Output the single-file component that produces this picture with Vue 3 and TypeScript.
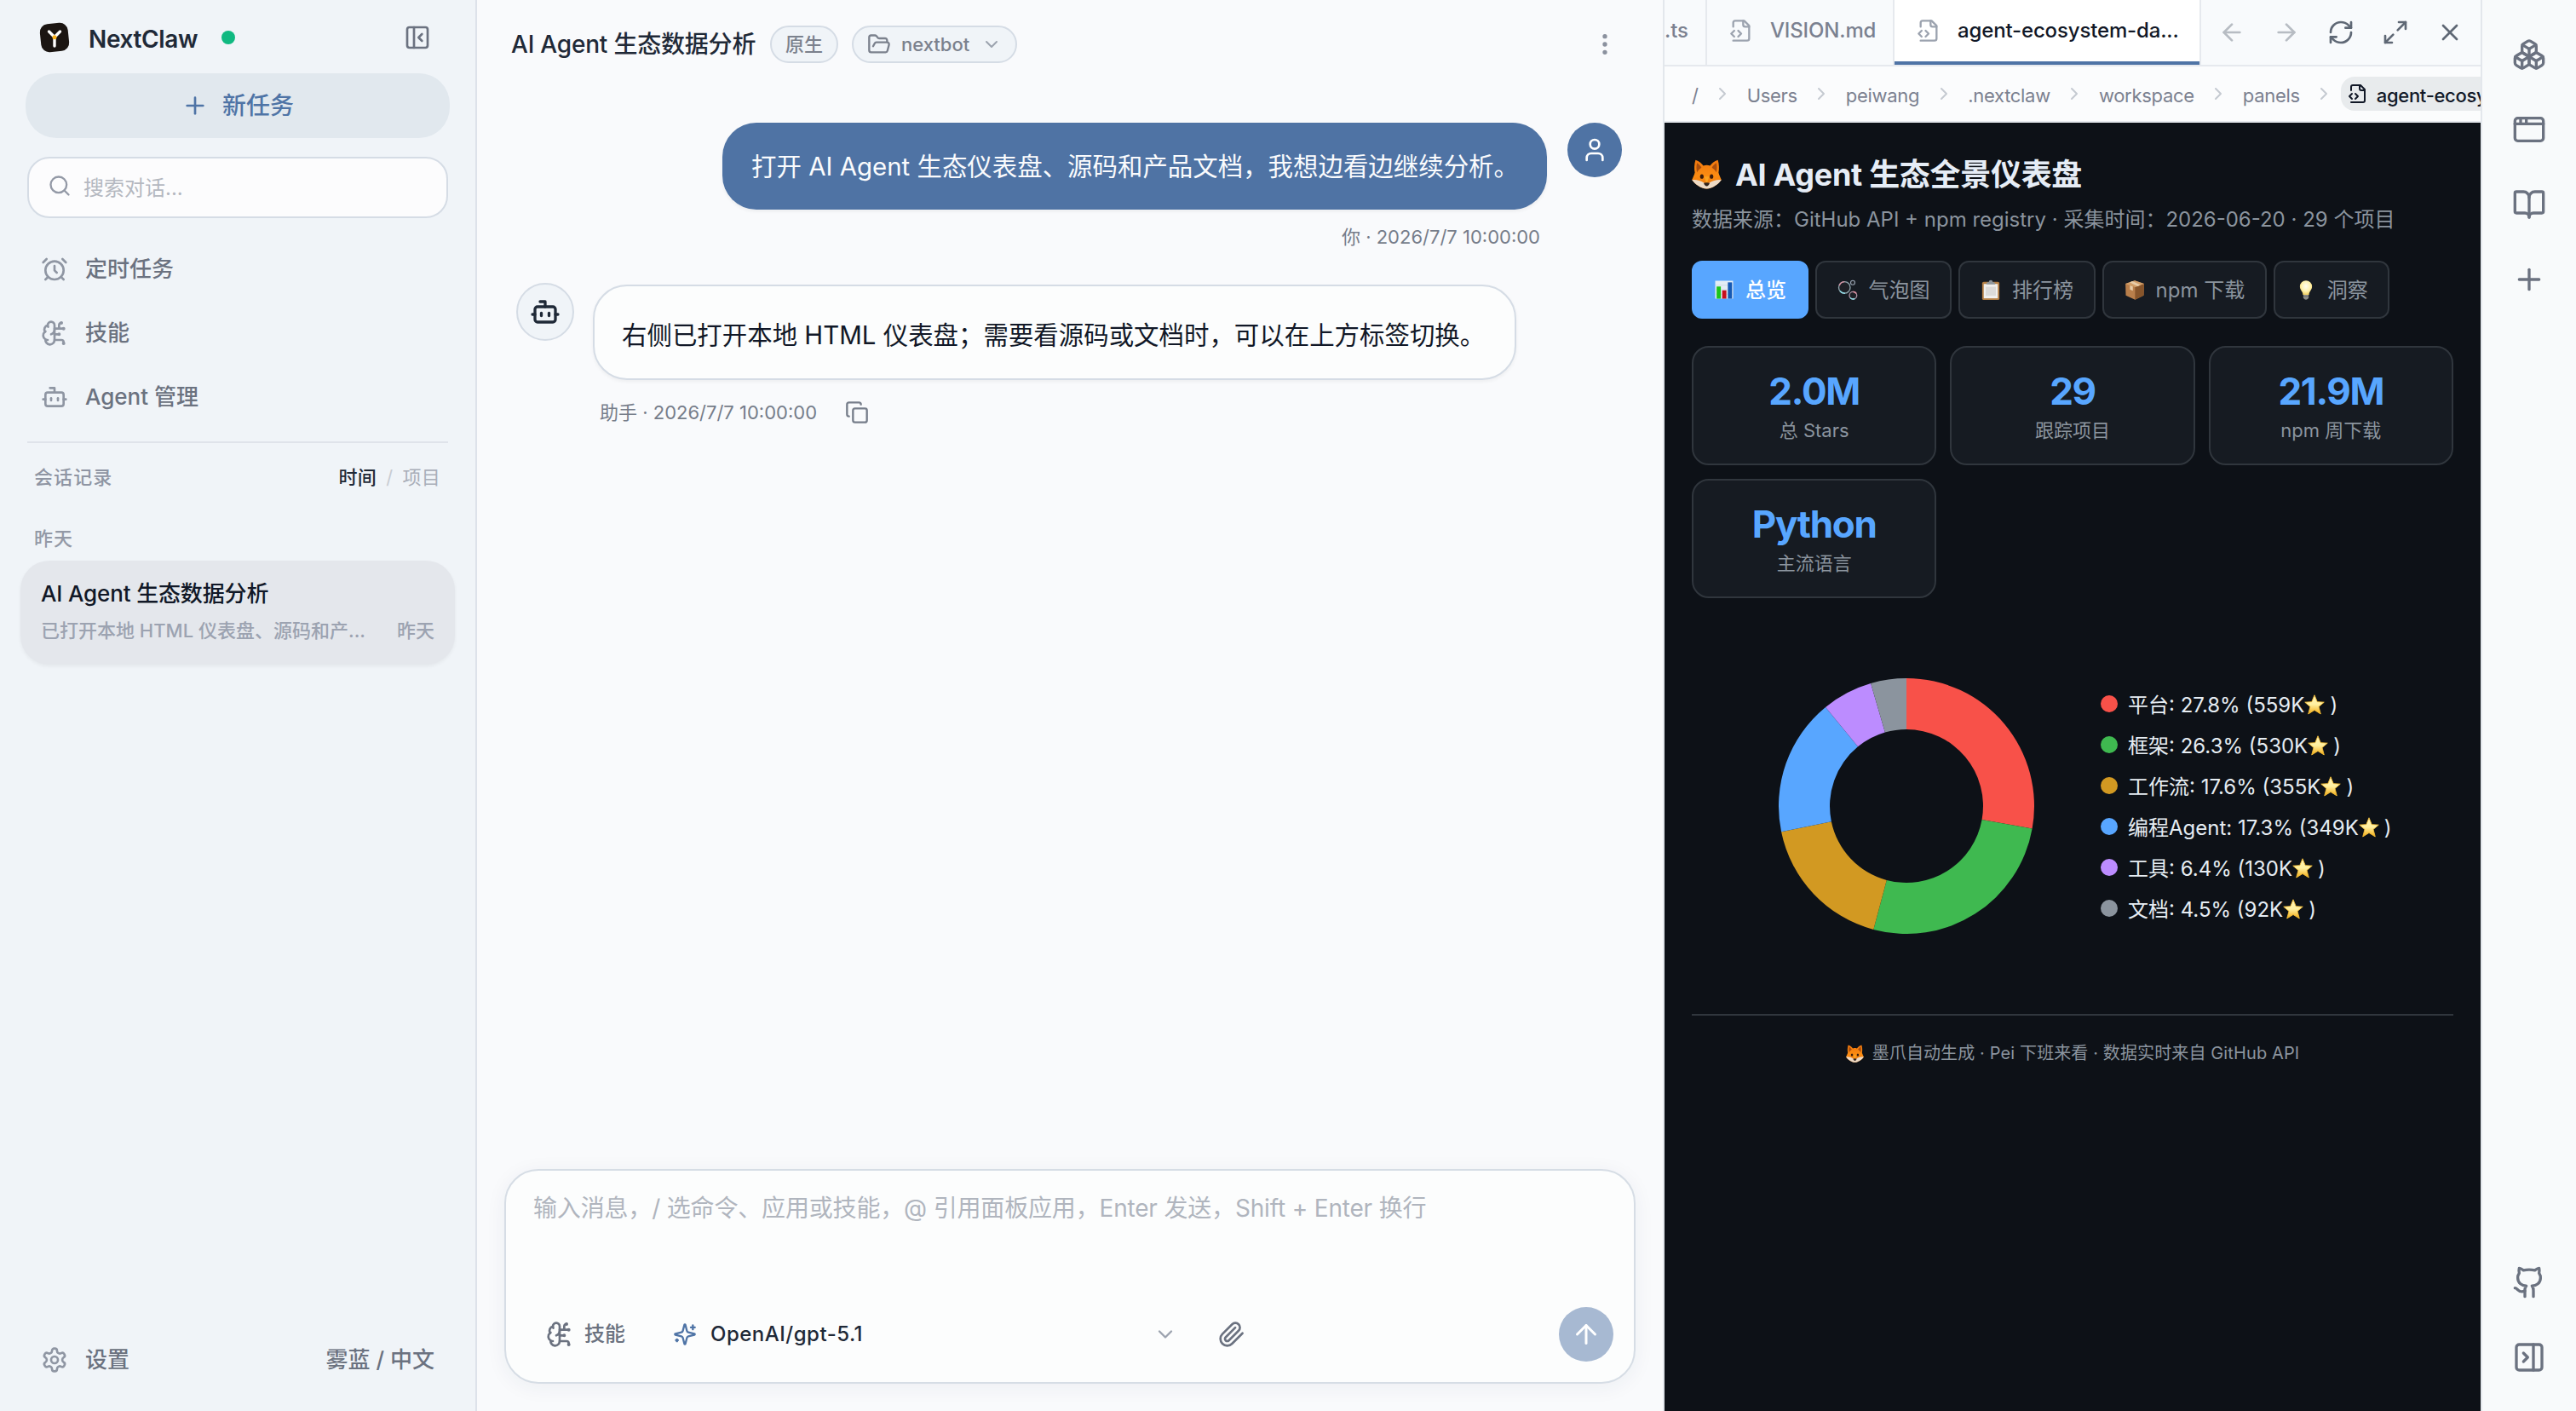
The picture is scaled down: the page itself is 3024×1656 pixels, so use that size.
<script setup lang="ts">
import { h } from 'vue'

const glyphs: Record<string, string> = {
  panelClose: '<rect width="18" height="18" x="3" y="3" rx="2"/><path d="M9 3v18"/><path d="m16 15-3-3 3-3"/>',
  panelRight: '<rect width="18" height="18" x="3" y="3" rx="2"/><path d="M15 3v18"/><path d="m8 9 3 3-3 3"/>',
  plus: '<path d="M5 12h14"/><path d="M12 5v14"/>',
  search: '<circle cx="11" cy="11" r="8"/><path d="m21 21-4.3-4.3"/>',
  alarm: '<circle cx="12" cy="13" r="8"/><path d="M12 9v4l2 2"/><path d="M5 3 2 6"/><path d="m22 6-3-3"/><path d="M6.38 18.7 4 21"/><path d="M17.64 18.67 20 21"/>',
  brain: '<path d="M12 5a3 3 0 1 0-5.997.125 4 4 0 0 0-2.526 5.77 4 4 0 0 0 .556 6.588A4 4 0 1 0 12 18Z"/><path d="M9 13a4.5 4.5 0 0 0 3-4"/><path d="M6.003 5.125A3 3 0 0 0 6.401 6.5"/><path d="M3.477 10.896a4 4 0 0 1 .585-.396"/><path d="M6 18a4 4 0 0 1-1.967-.516"/><path d="M12 13h4"/><path d="M12 18h6a2 2 0 0 1 2 2v1"/><path d="M12 8h8"/><path d="M16 8V5a2 2 0 0 1 2-2"/><circle cx="16" cy="13" r=".5"/><circle cx="18" cy="3" r=".5"/><circle cx="20" cy="21" r=".5"/><circle cx="20" cy="8" r=".5"/>',
  bot: '<path d="M12 8V4H8"/><rect width="16" height="12" x="4" y="8" rx="2"/><path d="M2 14h2"/><path d="M20 14h2"/><path d="M15 13v2"/><path d="M9 13v2"/>',
  gear: '<path d="M12.22 2h-.44a2 2 0 0 0-2 2v.18a2 2 0 0 1-1 1.73l-.43.25a2 2 0 0 1-2 0l-.15-.08a2 2 0 0 0-2.73.73l-.22.38a2 2 0 0 0 .73 2.73l.15.1a2 2 0 0 1 1 1.72v.51a2 2 0 0 1-1 1.74l-.15.09a2 2 0 0 0-.73 2.73l.22.38a2 2 0 0 0 2.73.73l.15-.08a2 2 0 0 1 2 0l.43.25a2 2 0 0 1 1 1.73V20a2 2 0 0 0 2 2h.44a2 2 0 0 0 2-2v-.18a2 2 0 0 1 1-1.73l.43-.25a2 2 0 0 1 2 0l.15.08a2 2 0 0 0 2.73-.73l.22-.39a2 2 0 0 0-.73-2.73l-.15-.08a2 2 0 0 1-1-1.74v-.5a2 2 0 0 1 1-1.74l.15-.09a2 2 0 0 0 .73-2.73l-.22-.38a2 2 0 0 0-2.73-.73l-.15.08a2 2 0 0 1-2 0l-.43-.25a2 2 0 0 1-1-1.73V4a2 2 0 0 0-2-2z"/><circle cx="12" cy="12" r="3"/>',
  folder: '<path d="m6 14 1.5-2.9A2 2 0 0 1 9.24 10H20a2 2 0 0 1 1.94 2.5l-1.54 6a2 2 0 0 1-1.95 1.5H4a2 2 0 0 1-2-2V5a2 2 0 0 1 2-2h3.9a2 2 0 0 1 1.69.9l.81 1.2a2 2 0 0 0 1.67.9H18a2 2 0 0 1 2 2v2"/>',
  down: '<path d="m6 9 6 6 6-6"/>',
  right: '<path d="m9 18 6-6-6-6"/>',
  more: '<circle cx="12" cy="12" r="1"/><circle cx="12" cy="5" r="1"/><circle cx="12" cy="19" r="1"/>',
  user: '<path d="M19 21v-2a4 4 0 0 0-4-4H9a4 4 0 0 0-4 4v2"/><circle cx="12" cy="7" r="4"/>',
  copy: '<rect width="14" height="14" x="8" y="8" rx="2"/><path d="M4 16c-1.1 0-2-.9-2-2V4c0-1.1.9-2 2-2h10c1.1 0 2 .9 2 2"/>',
  sparkles: '<path d="M9.937 15.5A2 2 0 0 0 8.5 14.063l-6.135-1.582a.5.5 0 0 1 0-.962L8.5 9.936A2 2 0 0 0 9.937 8.5l1.582-6.135a.5.5 0 0 1 .963 0L14.063 8.5A2 2 0 0 0 15.5 9.937l6.135 1.581a.5.5 0 0 1 0 .964L15.5 14.063a2 2 0 0 0-1.437 1.437l-1.582 6.135a.5.5 0 0 1-.963 0z"/><path d="M20 3v4"/><path d="M22 5h-4"/><path d="M4 17v2"/><path d="M5 18H3"/>',
  clip: '<path d="m21.44 11.05-9.19 9.19a6 6 0 0 1-8.49-8.49l8.57-8.57A4 4 0 1 1 18 8.84l-8.59 8.57a2 2 0 0 1-2.83-2.83l8.49-8.48"/>',
  up: '<path d="m5 12 7-7 7 7"/><path d="M12 19V5"/>',
  file: '<path d="M4 22h14a2 2 0 0 0 2-2V7l-5-5H6a2 2 0 0 0-2 2v4"/><path d="M14 2v4a2 2 0 0 0 2 2h4"/><path d="m5 12-3 3 3 3"/><path d="m9 18 3-3-3-3"/>',
  arrowLeft: '<path d="m12 19-7-7 7-7"/><path d="M19 12H5"/>',
  arrowRight: '<path d="M5 12h14"/><path d="m12 5 7 7-7 7"/>',
  refresh: '<path d="M3 12a9 9 0 0 1 9-9 9.75 9.75 0 0 1 6.74 2.74L21 8"/><path d="M21 3v5h-5"/><path d="M21 12a9 9 0 0 1-9 9 9.75 9.75 0 0 1-6.74-2.74L3 16"/><path d="M8 16H3v5"/>',
  maximize: '<path d="M15 3h6v6"/><path d="M9 21H3v-6"/><path d="m21 3-7 7"/><path d="m3 21 7-7"/>',
  close: '<path d="M18 6 6 18"/><path d="m6 6 12 12"/>',
  boxes: '<path d="M2.97 12.92A2 2 0 0 0 2 14.63v3.24a2 2 0 0 0 .97 1.71l3 1.8a2 2 0 0 0 2.06 0L12 19v-5.5l-5-3-4.03 2.42Z"/><path d="m7 16.5-4.74-2.85"/><path d="m7 16.5 5-3"/><path d="M7 16.5v5.17"/><path d="M12 13.5V19l3.97 2.38a2 2 0 0 0 2.06 0l3-1.8a2 2 0 0 0 .97-1.71v-3.24a2 2 0 0 0-.97-1.71L17 10.5l-5 3Z"/><path d="m17 16.5-5-3"/><path d="m17 16.5 4.74-2.85"/><path d="M17 16.5v5.17"/><path d="M7.97 4.42A2 2 0 0 0 7 6.13v4.37l5 3 5-3V6.13a2 2 0 0 0-.97-1.71l-3-1.8a2 2 0 0 0-2.06 0l-3 1.8Z"/><path d="M12 8 7.26 5.15"/><path d="m12 8 4.74-2.85"/><path d="M12 13.5V8"/>',
  appWindow: '<rect x="2" y="4" width="20" height="16" rx="2"/><path d="M10 4v4"/><path d="M2 8h20"/><path d="M6 4v4"/>',
  book: '<path d="M12 7v14"/><path d="M3 18a1 1 0 0 1-1-1V4a1 1 0 0 1 1-1h5a4 4 0 0 1 4 4 4 4 0 0 1 4-4h5a1 1 0 0 1 1 1v13a1 1 0 0 1-1 1h-6a3 3 0 0 0-3 3 3 3 0 0 0-3-3z"/>',
  github: '<path d="M15 22v-4a4.8 4.8 0 0 0-1-3.5c3 0 6-2 6-5.5.08-1.25-.27-2.48-1-3.5.28-1.15.28-2.35 0-3.5 0 0-1 0-3 1.5-2.64-.5-5.36-.5-8 0C6 2 5 2 5 2c-.3 1.15-.3 2.35 0 3.5A5.403 5.403 0 0 0 4 9c0 3.5 3 5.5 6 5.5-.39.49-.68 1.05-.85 1.65-.17.6-.22 1.23-.15 1.85v4"/><path d="M9 18c-4.51 2-5-2-7-2"/>',
}

// Full-colour pictograms, drawn on a 32-unit square
const pictures: Record<string, string> = {
  fox: '<defs><linearGradient id="fx" x1="0" y1="0" x2="0" y2="1"><stop offset="0" stop-color="#f0780e"/><stop offset=".55" stop-color="#fb8c12"/><stop offset="1" stop-color="#e8730c"/></linearGradient></defs><path d="M4 .6C8 2 11 4.600 12.400 6.800 14.800 6 17.200 6 19.600 6.800 21 4.600 24 2 28 .6 29.400 5 29.500 10.500 28.700 14.200 29.300 17 31 20 31.800 22 29 26.500 22 31.600 16 31.600S3 26.500.2 22C1 20 2.700 17 3.300 14.200 2.500 10.500 2.600 5 4 .6Z" fill="url(#fx)"/><path d="M5.600 3.800C8 5.400 9.600 7.200 10.400 8.800 8.400 10 6.600 12 5.600 14 4.800 10.500 4.800 7 5.600 3.800ZM26.400 3.800C24 5.400 22.400 7.200 21.600 8.800 23.600 10 25.400 12 26.400 14 27.200 10.500 27.200 7 26.400 3.800Z" fill="#a94e0d"/><path d="M.2 22C4 21.400 9.500 22.400 13 25.200L16 26.500 19 25.200C22.500 22.400 28 21.400 31.800 22 29 26.500 22 31.600 16 31.600S3 26.500.2 22Z" fill="#eedbc6"/><path d="M13.400 18.500 16 27 18.600 18.500Z" fill="#fba321"/><ellipse cx="10.800" cy="18.400" rx="1.900" ry="2.500" fill="#3a1c0c"/><ellipse cx="21.200" cy="18.400" rx="1.900" ry="2.500" fill="#3a1c0c"/><path d="M12.800 25.400Q16 24.200 19.200 25.400 18 28.800 16 28.800T12.800 25.400Z" fill="#32231c"/>',
  chart: '<path d="M2 2h28v28H2z" fill="#e3edf5"/><path d="M2 9h28M2 16h28M2 23h28" stroke="#c3d3df" stroke-width=".8"/><path d="M4.200 11h6.600v19H4.200z" fill="#1cc41c"/><path d="M12.900 17h6.600v13h-6.600z" fill="#c80f1c"/><path d="M21.800 4.500h6.600V30h-6.600z" fill="#1559b4"/>',
  bubbles: '<g fill="#1d2026"><circle cx="11" cy="12.500" r="9" stroke="#8ea4ac" stroke-width="1.800"/><circle cx="24.500" cy="25" r="5.800" stroke="#a98fa0" stroke-width="1.800"/><circle cx="24" cy="5" r="3.300" stroke="#9aa5b2" stroke-width="1.500"/></g><path d="M3 9.500A9 9 0 0 1 11 3.500M29.500 22A5.800 5.800 0 0 0 24.500 19.200" stroke="#e08fa0" stroke-width="2" fill="none"/><path d="M4 18A9 9 0 0 0 12 21.500M20 28.500A5.800 5.800 0 0 0 27 30" stroke="#8edbe6" stroke-width="2" fill="none"/>',
  clipboard: '<rect x="2.500" y="3.500" width="27" height="28.500" rx="2.500" fill="#b58046"/><path d="M5 7h22v22.500H5z" fill="#f1f0ee"/><path d="M8 11.500h16v14H8z" fill="#dcdbd9"/><path d="M9 7.500q0-3.500 4-3.500 0-3 3-3t3 3q4 0 4 3.500z" fill="#8d959c"/>',
  box: '<path d="M1.500 6.500 16 1.500 30.500 6.500 30 25 16.500 31.500 2 25z" fill="#b97f4b"/><path d="M16.500 12 30.500 6.500 30 25 16.500 31.500z" fill="#87552b"/><path d="M1.500 6.500 16 1.500 30.500 6.500 16.500 12z" fill="#d19e69"/><path d="M8 4.300 12.500 2.700 25 8.700 20.500 10.500z" fill="#e8cda9"/><path d="M8.500 9.200 13 11v6.500L8.500 15.500z" fill="#e8cda9"/>',
  bulb: '<defs><radialGradient id="bl" cx=".5" cy=".4" r=".6"><stop offset="0" stop-color="#fffef2"/><stop offset=".6" stop-color="#fff3b0"/><stop offset="1" stop-color="#f0cf62"/></radialGradient></defs><path d="M16 1.500A9.500 9.500 0 0 1 25.500 11C25.500 16.500 20.800 18.500 20.800 24H11.200C11.200 18.500 6.500 16.500 6.500 11A9.500 9.500 0 0 1 16 1.500Z" fill="url(#bl)"/><path d="M11.800 24h8.400v5q-2 2.500-4.200 2.500T11.800 29z" fill="#8f8f8a"/><path d="M11.800 26.500h8.400" stroke="#5d5d5a"/>',
  star: '<defs><linearGradient id="st" x1="0" y1="0" x2="0" y2="1"><stop offset="0" stop-color="#fff3b8"/><stop offset=".5" stop-color="#fff0a0"/><stop offset="1" stop-color="#f3ab12"/></linearGradient></defs><path d="M16 1 20.300 11.500 31 12.200 22.700 19.300 25.700 30.600 16 24.600 6.300 30.600 9.300 19.300 1 12.200 11.700 11.500Z" fill="url(#st)" stroke="#f5bd35" stroke-width="1.200" stroke-linejoin="round"/>',
}

const Icon = (p: { name: string; size: number; stroke?: number }) =>
  h('svg', {
    width: p.size, height: p.size, viewBox: '0 0 24 24', fill: 'none', stroke: 'currentColor',
    'stroke-width': p.stroke ?? 2, 'stroke-linecap': 'round', 'stroke-linejoin': 'round',
    innerHTML: glyphs[p.name],
  })
Icon.props = ['name', 'size', 'stroke']

const Pic = (p: { name: string; size: number }) =>
  h('svg', { width: p.size, height: p.size, viewBox: '0 0 32 32', innerHTML: pictures[p.name] })
Pic.props = ['name', 'size']

const nav = [
  { icon: 'alarm', label: '定时任务' },
  { icon: 'brain', label: '技能' },
  { icon: 'bot', label: 'Agent 管理' },
]
const crumbs = ['/', 'Users', 'peiwang', '.nextclaw', 'workspace', 'panels']
const views = [
  { pic: 'chart', label: '总览' },
  { pic: 'bubbles', label: '气泡图' },
  { pic: 'clipboard', label: '排行榜' },
  { pic: 'box', label: 'npm 下载' },
  { pic: 'bulb', label: '洞察' },
]
const stats = [
  { value: '2.0M', label: '总 Stars' },
  { value: '29', label: '跟踪项目' },
  { value: '21.9M', label: 'npm 周下载' },
  { value: 'Python', label: '主流语言' },
]
const shares = [
  { name: '平台', pct: 27.8, stars: '559K', color: '#f85149' },
  { name: '框架', pct: 26.3, stars: '530K', color: '#3fb950' },
  { name: '工作流', pct: 17.6, stars: '355K', color: '#d29922' },
  { name: '编程Agent', pct: 17.3, stars: '349K', color: '#58a6ff' },
  { name: '工具', pct: 6.4, stars: '130K', color: '#bc8cff' },
  { name: '文档', pct: 4.5, stars: '92K', color: '#8b949e' },
]

// Ring segments, clockwise from the top
const total = shares.reduce((sum, s) => sum + s.pct, 0)
let acc = 0
const slices = shares.map((s) => {
  const a = (acc / total) * Math.PI * 2
  acc += s.pct
  const b = (acc / total) * Math.PI * 2
  const pt = (r: number, t: number) => `${(150 + r * Math.sin(t)).toFixed(2)} ${(150 - r * Math.cos(t)).toFixed(2)}`
  return { color: s.color, d: `M${pt(150, a)}A150 150 0 0 1 ${pt(150, b)}L${pt(90, b)}A90 90 0 0 0 ${pt(90, a)}Z` }
})
</script>

<template>
  <div class="app">
    <aside class="sidebar">
      <header class="brand">
        <svg class="logo" width="40" height="40" viewBox="0 0 40 40">
          <rect x="3.500" y="3.500" width="33" height="33" rx="9.500" fill="#1b1512" transform="rotate(-6 20 20)" />
          <path d="M13.500 13 20 19.500 26.500 13M20 19.500V30" fill="none" stroke="#fff" stroke-width="3.400" stroke-linecap="round" stroke-linejoin="round" />
          <circle cx="20" cy="19.800" r="2.500" fill="#fbb11b" />
        </svg>
        <span class="brand-name">NextClaw</span>
        <i class="online"></i>
        <Icon class="collapse" name="panelClose" :size="32" />
      </header>
      <button class="new-task"><Icon name="plus" :size="32" /><span>新任务</span></button>
      <div class="search"><Icon name="search" :size="28" /><span>搜索对话...</span></div>
      <nav class="nav">
        <a v-for="n in nav" :key="n.label"><Icon :name="n.icon" :size="32" /><span>{{ n.label }}</span></a>
      </nav>
      <div class="rule"></div>
      <div class="history-head">
        <span>会话记录</span>
        <div class="switch"><b>时间</b><i>/</i><span>项目</span></div>
      </div>
      <div class="day">昨天</div>
      <div class="session">
        <div class="session-title">AI Agent 生态数据分析</div>
        <div class="session-sub"><span>已打开本地 HTML 仪表盘、源码和产...</span><time>昨天</time></div>
      </div>
      <footer class="side-foot">
        <Icon name="gear" :size="32" /><span>设置</span><span class="theme">雾蓝 / 中文</span>
      </footer>
    </aside>

    <main class="chat">
      <header class="chat-head">
        <h1>AI Agent 生态数据分析</h1>
        <span class="pill">原生</span>
        <span class="pill project"><Icon name="folder" :size="28" /><span>nextbot</span><Icon class="dim" name="down" :size="24" /></span>
        <Icon class="kebab" name="more" :size="32" />
      </header>
      <section class="thread">
        <div class="row mine">
          <div class="bubble">打开 AI Agent 生态仪表盘、源码和产品文档，我想边看边继续分析。</div>
          <div class="avatar"><Icon name="user" :size="32" /></div>
        </div>
        <div class="meta mine-meta">你 · 2026/7/7 10:00:00</div>
        <div class="row theirs">
          <div class="avatar"><Icon name="bot" :size="36" :stroke="2.200" /></div>
          <div class="bubble">右侧已打开本地 HTML 仪表盘；需要看源码或文档时，可以在上方标签切换。</div>
        </div>
        <div class="meta their-meta"><span>助手 · 2026/7/7 10:00:00</span><Icon name="copy" :size="28" /></div>
      </section>
      <section class="composer">
        <div class="placeholder">输入消息，/ 选命令、应用或技能，@ 引用面板应用，Enter 发送，Shift + Enter 换行</div>
        <div class="tools">
          <Icon name="brain" :size="32" /><span class="skill">技能</span>
          <Icon class="spark" name="sparkles" :size="28" /><span class="model">OpenAI/gpt-5.1</span>
          <Icon class="dim" name="down" :size="28" />
          <Icon class="attach" name="clip" :size="32" />
          <button class="send"><Icon name="up" :size="36" /></button>
        </div>
      </section>
    </main>

    <section class="panel">
      <header class="tabs">
        <div class="tab cut"><span>.ts</span></div>
        <div class="tab"><Icon name="file" :size="28" /><span>VISION.md</span></div>
        <div class="tab active"><Icon name="file" :size="28" /><span>agent-ecosystem-da...</span></div>
        <div class="actions">
          <Icon class="off" name="arrowLeft" :size="32" /><Icon class="off" name="arrowRight" :size="32" />
          <Icon name="refresh" :size="32" /><Icon name="maximize" :size="32" /><Icon name="close" :size="32" />
        </div>
      </header>
      <div class="crumbs">
        <template v-for="c in crumbs" :key="c"><span>{{ c }}</span><Icon class="sep" name="right" :size="24" /></template>
        <div class="current"><Icon name="file" :size="24" /><span>agent-ecosystem-dashboard.html</span></div>
      </div>
      <article class="dash">
        <h2><Pic name="fox" :size="35" /><span>AI Agent 生态全景仪表盘</span></h2>
        <p class="source">数据来源：GitHub API + npm registry · 采集时间：2026-06-20 · 29 个项目</p>
        <div class="views">
          <button v-for="(v, i) in views" :key="v.label" :class="{ on: i === 0 }"><Pic :name="v.pic" :size="24" /><span>{{ v.label }}</span></button>
        </div>
        <div class="stats">
          <div v-for="s in stats" :key="s.label" class="stat"><strong>{{ s.value }}</strong><span>{{ s.label }}</span></div>
        </div>
        <div class="chart">
          <svg width="300" height="300" viewBox="0 0 300 300"><path v-for="s in slices" :key="s.color" :d="s.d" :fill="s.color" /></svg>
          <ul>
            <li v-for="s in shares" :key="s.name"><i :style="{ background: s.color }"></i><span>{{ s.name }}: {{ s.pct }}% ({{ s.stars }}</span><Pic name="star" :size="24" /><span class="end">)</span></li>
          </ul>
        </div>
        <footer class="dash-foot"><Pic name="fox" :size="21" /><span>墨爪自动生成 · Pei 下班来看 · 数据实时来自 GitHub API</span></footer>
      </article>
    </section>

    <aside class="rail">
      <Icon name="boxes" :size="40" /><Icon name="appWindow" :size="40" /><Icon name="book" :size="40" /><Icon name="plus" :size="40" />
      <div class="grow"></div>
      <Icon name="github" :size="40" /><Icon name="panelRight" :size="40" />
    </aside>
  </div>
</template>

<style>
body { background: #f9fafc; }
</style>

<style scoped>
.app {
  display: flex; width: 3024px; height: 1656px; overflow: hidden;
  font-family: Inter, "Noto Sans CJK SC", sans-serif; font-size: 26px; line-height: 1.3; color: #6b7280; background: #f9fafc;
}
.app *, .app { box-sizing: border-box; }
svg { flex: none; display: block; }
button { font: inherit; border: 0; padding: 0; margin: 0; }
span, time, b, h1, h2, p { white-space: nowrap; margin: 0; }

.sidebar { width: 560px; flex: none; background: #f0f4f8; border-right: 2px solid #dde2ea; display: flex; flex-direction: column; padding: 24px 24px 0; }
.brand { display: flex; align-items: center; height: 40px; padding-left: 20px; }
.brand-name { font-size: 28px; font-weight: 600; color: #1f2937; margin-left: 20px; line-height: 40px; padding-top: 4px; letter-spacing: -.35px; }
.online { width: 16px; height: 16px; border-radius: 50%; background: #10b981; margin-left: 28px; }
.collapse { margin-left: auto; margin-right: 28px; }
.new-task { margin: 22px 6px 0; height: 76px; flex: none; border-radius: 36px; background: #e1e8ee; color: #4f74a6; display: flex; align-items: center; justify-content: center; gap: 16px; font-size: 28px; font-weight: 500; }
.search { margin: 22px 8px 0; height: 72px; border-radius: 26px; border: 2px solid #d5dce5; background: #fcfcfd; display: flex; align-items: center; padding-left: 22px; gap: 14px; color: #9399a6; font-size: 24px; }
.search svg { margin-top: -4px; }
.search span { color: #b4b8c0; padding-top: 2px; }
.nav { margin-top: 22px; padding: 0 24px; }
.nav a { display: flex; align-items: center; height: 75px; gap: 20px; font-weight: 500; }
.nav a svg, .side-foot svg { color: #8f96a3; }
.rule { height: 2px; background: #dfe3ea; margin: 15px 8px 0; }
.history-head { display: flex; justify-content: space-between; padding: 0 17px 0 16px; margin-top: 20px; line-height: 40px; font-size: 22px; font-weight: 500; letter-spacing: 1.1px; color: #8f95a3; }
.switch { display: flex; letter-spacing: .3px; }
.switch b { font-weight: 500; color: #1f2937; }
.switch i { font-style: normal; font-weight: 400; color: #c8ccd2; margin: 0 11px; }
.switch span { color: #a9aeb8; font-weight: 400; }
.day { margin-top: 32px; padding-left: 16px; line-height: 40px; font-size: 22px; font-weight: 500; letter-spacing: 1.1px; color: #9399a6; }
.session { margin-top: 6px; height: 122px; width: 510px; border-radius: 34px; background: #e4e7ec; box-shadow: 0 2px 4px rgba(0, 0, 0, .05); padding: 19px 24px 0; }
.session-title { line-height: 40px; color: #111827; font-weight: 500; white-space: nowrap; letter-spacing: -.15px; }
.session-sub { display: flex; justify-content: space-between; line-height: 40px; margin-top: 3px; font-size: 22px; font-weight: 500; color: #9ca3b1; }
.side-foot { margin-top: auto; height: 120px; display: flex; align-items: center; padding: 0 24px; gap: 20px; font-weight: 500; }
.theme { margin-left: auto; }

.chat { width: 1392px; flex: none; display: flex; flex-direction: column; }
.chat-head { height: 104px; display: flex; align-items: center; padding-left: 40px; }
h1 { font-size: 28px; font-weight: 500; color: #1f2937; line-height: 40px; width: 304px; letter-spacing: -.2px; }
.pill { height: 44px; border: 2px solid #d5dce5; border-radius: 22px; background: #f0f4f8; padding: 0 16px; font-size: 22px; line-height: 40px; font-weight: 500; color: #7b818d; }
.project { margin-left: 16px; display: flex; align-items: center; gap: 12px; width: 194px; }
.project .dim { margin-left: auto; }
.dim { color: #9ca3af; }
.kebab { margin-left: auto; margin-right: 52px; color: #8b919e; }
.thread { flex: 1; padding-top: 40px; }
.row { display: flex; align-items: flex-start; }
.bubble { font-size: 29.44px; border-radius: 40px; white-space: nowrap; }
.mine { justify-content: flex-end; padding-right: 48px; gap: 24px; }
.mine .bubble { height: 102px; line-height: 103px; padding-left: 34px; width: 968px; background: #4f73a4; color: #fafbfd; box-shadow: 0 2px 4px rgba(0, 0, 0, .06); }
.avatar { width: 64px; height: 64px; border-radius: 50%; background: #4f73a4; color: #fff; display: flex; align-items: center; justify-content: center; }
.meta { font-size: 22px; line-height: 40px; color: #767d8a; }
.mine-meta { text-align: right; padding-right: 144px; margin-top: 12px; }
.theirs { padding-left: 46px; margin-top: 34px; gap: 22px; }
.theirs .avatar { width: 68px; height: 68px; background: #f0f4f8; border: 2px solid #d5dce5; color: #1f2937; }
.theirs .bubble { margin-top: 2px; height: 112px; line-height: 115px; width: 1084px; padding-left: 32px; border: 2px solid #d5dce5; background: #fcfdfd; color: #111827; box-shadow: 0 2px 4px rgba(0, 0, 0, .05); }
.their-meta { display: flex; align-items: center; padding-left: 144px; gap: 33px; margin-top: 18px; }
.composer { margin: 0 32px 32px; height: 252px; border: 2px solid #d6dde5; border-radius: 40px; background: #fcfdfd; box-shadow: 0 4px 24px rgba(30, 50, 80, .06); padding: 24px 24px 0 32px; }
.placeholder { font-size: 28px; line-height: 40px; color: #b0b5be; white-space: nowrap; letter-spacing: -.17px; }
.tools { display: flex; align-items: center; height: 64px; margin-top: 96px; padding-left: 15px; font-size: 24px; font-weight: 500; }
.skill { margin-left: 13px; }
.spark { margin-left: 56px; color: #4f74a6; }
.model { margin-left: 16px; color: #1f2937; width: 520px; letter-spacing: .5px; }
.attach { margin-left: 48px; }
.send { margin-left: auto; width: 64px; height: 64px; border-radius: 50%; background: #a7b9d2; color: #fff; display: flex; align-items: center; justify-content: center; }

.panel { width: 962px; flex: none; border: 0 solid #e3e7ec; border-width: 0 2px; display: flex; flex-direction: column; }
.tabs { height: 78px; border-bottom: 2px solid #e6e9ee; display: flex; background: #f8fafc; font-size: 24px; font-weight: 500; color: #7b8190; }
.tab { display: flex; align-items: center; gap: 20px; width: 220px; padding: 0 0 4px 26px; border-right: 2px solid #e6e9ee; letter-spacing: -.15px; }
.tab svg { color: #9ca3af; }
.tab.cut { width: 50px; padding-left: 0; }
.tab.active { width: 360px; background: #fff; color: #111827; box-shadow: inset 0 -4px #4f74a6; }
.actions { display: flex; gap: 32px; align-items: center; padding-left: 20px; color: #5f6875; }
.off { opacity: .42; }
.crumbs { height: 66px; border-bottom: 2px solid #e6e9ee; background: #fbfcfd; display: flex; align-items: center; padding-left: 32px; gap: 16.5px; font-size: 22px; letter-spacing: -.3px; color: #7b8190; overflow: hidden; }
.crumbs span { padding-top: 4px; }
.sep { color: #c5cad1; }
.current { display: flex; align-items: center; height: 40px; flex: none; background: #e8ebed; border-radius: 16px; padding: 0 8px; gap: 10px; color: #111827; font-weight: 500; margin-left: -9px; }
.dash { flex: 1; background: #0d1117; padding: 36px 32px 0; color: #8b949e; }
h2 { display: flex; align-items: center; gap: 16px; height: 48px; font-size: 36px; font-weight: 700; color: #e6edf6; letter-spacing: -.3px; }
h2 span { line-height: 48px; padding-top: 2px; }
.source { margin-top: 8px; line-height: 44px; font-size: 24px; }
.views { display: flex; gap: 8px; margin-top: 26px; }
.views button { height: 68px; padding: 0 23.5px 0 24px; border: 2px solid #30363d; border-radius: 12px; background: #161b22; color: #8b949e; font-size: 24px; display: flex; align-items: center; gap: 13px; }
.views button span { padding-top: 2px; }
.views button.on { background: #58a6ff; border-color: #58a6ff; color: #fff; font-weight: 500; }
.stats { display: grid; grid-template-columns: repeat(3, 1fr); gap: 16px; margin-top: 32px; }
.stat { height: 140px; border: 2px solid #30363d; border-radius: 20px; background: #161b22; display: flex; flex-direction: column; align-items: center; padding-top: 24px; }
.stat strong { font-size: 44px; line-height: 54px; font-weight: 700; color: #58a6ff; letter-spacing: -1.3px; }
.stat span { font-size: 22px; line-height: 36px; margin-top: 1px; }
.chart { display: flex; align-items: center; margin-top: 94px; padding-left: 102px; gap: 78px; }
ul { list-style: none; margin: 0; padding: 0; color: #e6edf3; font-size: 24px; }
li { display: flex; align-items: center; height: 48px; }
li i { width: 20px; height: 20px; border-radius: 50%; margin-right: 12px; }
li span { padding-top: 3px; }
li svg { margin-top: 2px; }
.end { margin-left: 6px; }
.dash-foot { margin-top: 94px; border-top: 2px solid #30363d; padding-top: 28px; display: flex; justify-content: center; align-items: center; gap: 10px; font-size: 20px; line-height: 32px; letter-spacing: .12px; }
.rail { flex: 1; background: #f8fafb; display: flex; flex-direction: column; align-items: center; padding: 44px 0 43px; gap: 48px; }
.grow { flex: 1; }
</style>
